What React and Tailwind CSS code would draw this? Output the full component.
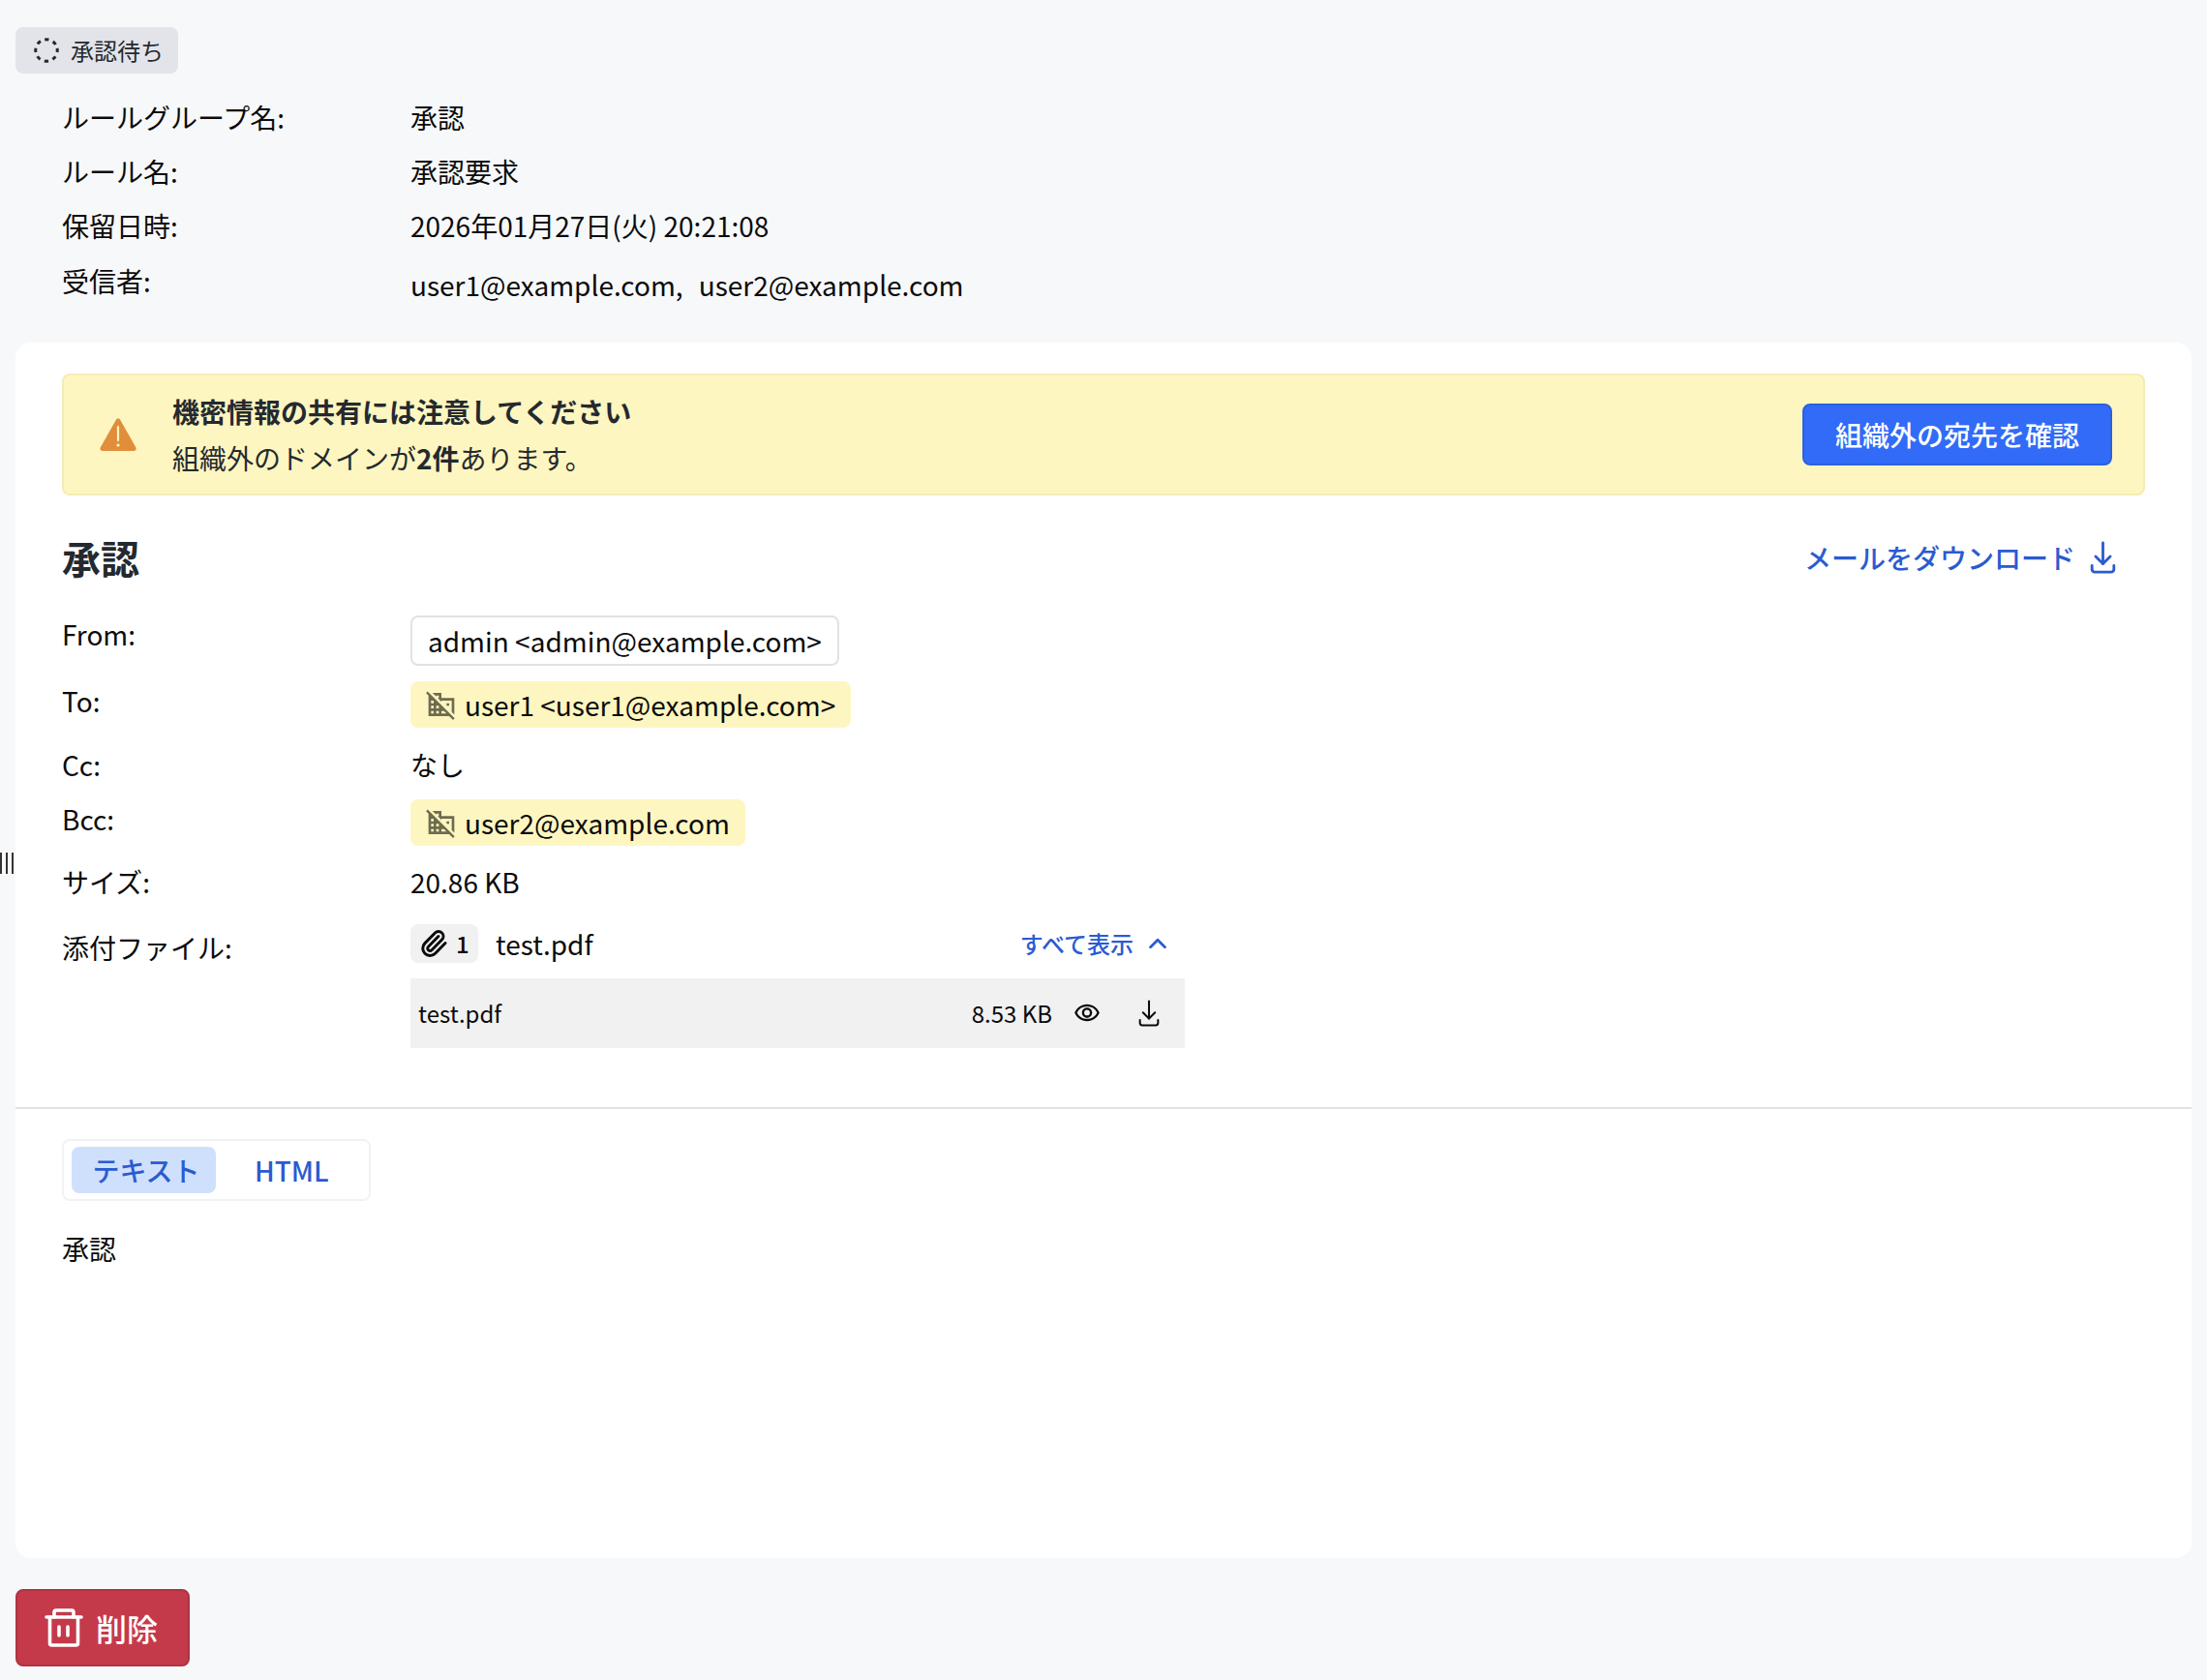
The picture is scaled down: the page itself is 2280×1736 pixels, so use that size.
import { ChevronUp, Paperclip } from "lucide-react";
import { MdDomainDisabled, MdOutlineVisibility } from "react-icons/md";

const MetaRow = ({ label, children, className = "h-14 items-center" }) => (
  <div className={`flex ${className}`}>
    <div className="w-[360px] shrink-0">{label}</div>
    <div>{children}</div>
  </div>
);

const FieldRow = ({ label, labelClass = "", className = "", children }) => (
  <div className={`flex items-start ${className}`}>
    <div className={`w-[360px] shrink-0 leading-10 ${labelClass}`}>{label}</div>
    <div>{children}</div>
  </div>
);

const ExternalChip = ({ children }) => (
  <div className="flex h-12 items-center gap-2 rounded-lg bg-[#fef6c0] pl-4 pr-4">
    <MdDomainDisabled className="size-8 text-[#6e6c4f]" />
    <span className="leading-10">{children}</span>
  </div>
);

const PendingIcon = () => (
  <svg viewBox="0 0 26 26" fill="none" stroke="currentColor" strokeWidth="3" strokeDasharray="4.200 4.640" className="size-[26px] -rotate-[11deg]">
    <circle cx="13" cy="13" r="11.250" />
  </svg>
);

const DownloadIcon = ({ className, strokeWidth = 3 }) => (
  <svg viewBox="0 0 28 36" fill="none" stroke="currentColor" strokeWidth={strokeWidth} strokeLinecap="round" strokeLinejoin="round" className={className}>
    <path d="M14 2v23" />
    <path d="M6 17l8 8 8-8" />
    <path d="M2 27v4a3 3 0 0 0 3 3h18a3 3 0 0 0 3-3v-4" />
  </svg>
);

const TrashIcon = () => (
  <svg viewBox="0 0 40 40" fill="none" stroke="currentColor" strokeWidth="3.6" strokeLinecap="round" strokeLinejoin="round" className="size-10">
    <path d="M2 9h36" />
    <path d="M5.500 9v27a2 2 0 0 0 2 2h25a2 2 0 0 0 2-2V9" />
    <path d="M10 9V4a2 2 0 0 1 2-2h16a2 2 0 0 1 2 2v5" />
    <path d="M15 19v9M24 19v9" />
  </svg>
);

const App = () => {
  return (
    <div className="relative min-h-screen w-full bg-[#f7f8fa] px-4 pt-7 font-['Noto_Sans_CJK_JP','Noto_Sans',sans-serif] text-[28px] text-[#0b0b0b]">
      {/* resize handle */}
      <div className="absolute left-0 top-[881px] flex h-[22px] gap-1">
        <span className="w-[2px] bg-[#333]" />
        <span className="w-[2px] bg-[#333]" />
        <span className="w-[2px] bg-[#333]" />
      </div>

      <div className="flex h-12 w-[168px] items-center gap-3 rounded-lg bg-[#e2e4e9] pl-[19px] text-2xl text-[#24292f]">
        <PendingIcon />
        <span>承認待ち</span>
      </div>

      <div className="mt-[17px] pl-12 leading-10">
        <MetaRow label="ルールグループ名:">承認</MetaRow>
        <MetaRow label="ルール名:">承認要求</MetaRow>
        <MetaRow label="保留日時:">2026年01月27日(火) 20:21:08</MetaRow>
        <MetaRow label="受信者:" className="mt-[9px] h-[84px] items-start">
          <div className="mt-1">
            user1@example.com,<span className="ml-4">user2@example.com</span>
          </div>
        </MetaRow>
      </div>

      <div className="h-[1256px] rounded-2xl bg-white">
        <div className="px-12 pt-8">
          <div className="flex h-[126px] items-center justify-between rounded-lg border-2 border-[#f5ecb5] bg-[#fef6c0] pl-[37px] pr-8">
            <div className="flex items-center gap-[37px]">
              <svg viewBox="0 0 38 34" className="h-[34px] w-[38px]">
                <path d="M19 0.500c1 0 1.800.500 2.300 1.400l16 28.400c1 1.700-.200 3.700-2.200 3.700H3c-2 0-3.200-2-2.200-3.700l16-28.400C17.200 1 18 .500 19 .500z" fill="#e08e3a" />
                <path d="M19 9v14" stroke="#fef6c0" strokeWidth="2.200" strokeLinecap="round" />
                <circle cx="19" cy="28" r="1.600" fill="#fef6c0" />
              </svg>
              <div className="leading-12 text-[#24292f]">
                <div className="font-bold">機密情報の共有には注意してください</div>
                <div>
                  組織外のドメインが<span className="font-bold">2件</span>あります。
                </div>
              </div>
            </div>
            <button className="h-16 w-80 rounded-lg border-2 border-[#2c60de] bg-[#316bf7] font-medium text-white">
              組織外の宛先を確認
            </button>
          </div>

          <div className="mt-9 flex h-14 items-center justify-between pr-[30px]">
            <h2 className="text-[40px] font-bold text-[#24292f]">承認</h2>
            <a className="flex items-center gap-[15px] font-medium text-[#2a5bd0]">
              メールをダウンロード
              <DownloadIcon className="h-[34px] w-[27px]" />
            </a>
          </div>

          <FieldRow label="From:" labelClass="-mt-px" className="mt-8">
            <div className="flex h-[52px] items-center rounded-lg border-2 border-[#e2e2e2] bg-white px-4">
              admin &lt;admin@example.com&gt;
            </div>
          </FieldRow>
          <FieldRow label="To:" className="mt-4">
            <ExternalChip>user1 &lt;user1@example.com&gt;</ExternalChip>
          </FieldRow>
          <FieldRow label="Cc:" className="mt-[18px]">
            <div className="leading-10">なし</div>
          </FieldRow>
          <FieldRow label="Bcc:" className="mt-4">
            <ExternalChip>user2@example.com</ExternalChip>
          </FieldRow>
          <FieldRow label="サイズ:" className="mt-[17px]">
            <div className="leading-10">20.86 KB</div>
          </FieldRow>
          <FieldRow label="添付ファイル:" labelClass="mt-1" className="mt-6">
            <div className="w-[800px]">
              <div className="flex h-10 items-center">
                <div className="flex h-10 w-[70px] items-center gap-2 rounded-lg bg-[#f1f1f1] pl-[9px] text-2xl font-medium">
                  <Paperclip className="size-[30px]" strokeWidth={2.4} />
                  <span>1</span>
                </div>
                <span className="ml-[18px] leading-10">test.pdf</span>
                <span className="ml-auto flex items-center gap-[10px] pr-[13px] text-2xl font-medium text-[#2a5bd0]">
                  すべて表示
                  <ChevronUp className="size-[30px]" strokeWidth={2.2} />
                </span>
              </div>
              <div className="mt-4 flex h-[72px] items-center bg-[#f1f1f1] pl-2 text-2xl">
                <span>test.pdf</span>
                <span className="ml-auto">8.53 KB</span>
                <MdOutlineVisibility className="ml-[22px] size-7" />
                <DownloadIcon className="ml-[39px] mr-[26px] h-7 w-[22px]" strokeWidth={2.6} />
              </div>
            </div>
          </FieldRow>
        </div>

        <div className="mt-[61px] border-t-2 border-[#e2e2e2] px-12 pt-[31px]">
          <div className="flex h-16 w-[319px] items-center rounded-lg border-2 border-[#f1f2f4] pl-2 font-medium text-[#2a5bd0]">
            <div className="flex h-12 w-[149px] items-center justify-center rounded-lg bg-[#cfe0fc] pl-[5px]">テキスト</div>
            <div className="ml-[40px]">HTML</div>
          </div>
          <div className="mt-[29px] leading-10">承認</div>
        </div>
      </div>

      <button className="mt-8 flex h-20 w-[180px] items-center gap-[13px] rounded-lg border-2 border-[#ad3342] bg-[#c43a4b] pl-7 text-[32px] font-medium text-white">
        <TrashIcon />
        削除
      </button>
    </div>
  );
};

export default App;
